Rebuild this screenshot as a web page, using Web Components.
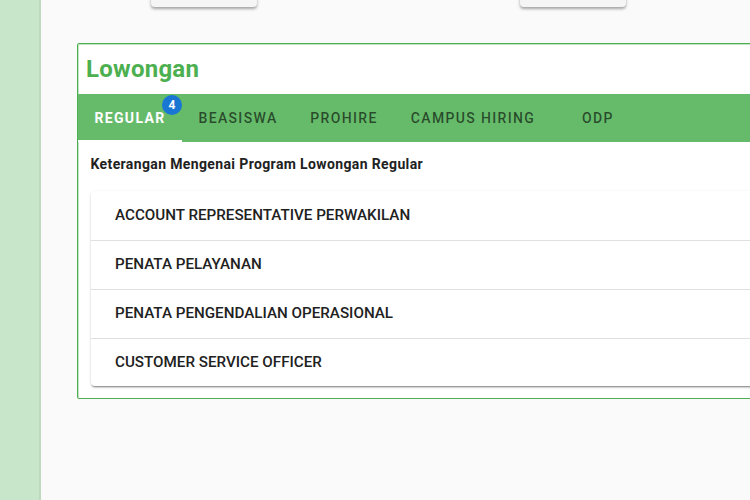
<!DOCTYPE html>
<html><head><meta charset="utf-8"><title>Lowongan</title>
<style>
html,body{margin:0;padding:0;width:750px;height:500px;overflow:hidden;background:#fafafa;font-family:Roboto,"Liberation Sans",sans-serif}
</style></head><body>
<app-shell>
  <stub-row></stub-row>
  <job-panel title-text="Lowongan">
    <job-tabs></job-tabs>
    <p-note>Keterangan Mengenai Program Lowongan Regular</p-note>
    <job-list>
      <job-item>ACCOUNT REPRESENTATIVE PERWAKILAN</job-item>
      <job-item>PENATA PELAYANAN</job-item>
      <job-item>PENATA PENGENDALIAN OPERASIONAL</job-item>
      <job-item>CUSTOMER SERVICE OFFICER</job-item>
    </job-list>
  </job-panel>
</app-shell>
<script>
function def(name,html,init){
  customElements.define(name,class extends HTMLElement{
    constructor(){super();this.attachShadow({mode:'open'}).innerHTML=html;}
    connectedCallback(){if(init)init(this);}
  });
}
def('app-shell',`<style>
:host{display:flex;width:750px;height:500px;overflow:hidden;background:#fafafa}
.side{flex:none;height:100%;background:#c8e6c9;border-right:2px solid #bfd9c0;width:39px}
.main{flex:none;width:900px;padding-left:36px;box-sizing:border-box}
</style><div class="side"></div><div class="main"><slot></slot></div>`);
def('stub-row',`<style>
:host{display:flex;height:7px;margin-left:74px;gap:263px;margin-bottom:36px;align-items:flex-end}
.b{width:106px;height:20px;background:#f5f5f5;border-radius:0 0 4px 4px;box-shadow:0 2px 3px rgba(0,0,0,.35)}
</style><div class="b"></div><div class="b"></div>`);
def('job-panel',`<style>
:host{display:block;width:860px;box-sizing:border-box;border:1px solid #4caf50;background:#fff;border-radius:2px;padding-bottom:12px;box-shadow:inset 1px 1px 0 rgba(76,175,80,.35)}
h2{margin:0;height:50px;padding-left:8px;font:700 24px/51px Roboto,sans-serif;letter-spacing:.25px;color:#4caf50}
</style><h2></h2><slot></slot>`,el=>{el.shadowRoot.querySelector('h2').textContent=el.getAttribute('title-text');});
def('job-tabs',`<style>
:host{display:flex;height:48px;background:#66bb6a;font:500 14px/48px Roboto,sans-serif;letter-spacing:1.35px;color:rgba(0,0,0,.6)}
.t{position:relative;text-align:center;box-sizing:border-box;flex:none;height:48px}
.a{color:#fff;border-bottom:2px solid #fff;width:104px;font-weight:700}
.badge{position:absolute;left:84px;top:1px;width:20px;height:20px;border-radius:50%;background:#1976d2;color:#fff;font:700 12px/20px Roboto,sans-serif;letter-spacing:0;text-align:center}
</style>
<div class="t a">REGULAR<span class="badge">4</span></div>
<div class="t" style="width:112px">BEASISWA</div>
<div class="t" style="width:100px">PROHIRE</div>
<div class="t" style="width:158px">CAMPUS HIRING</div>
<div class="t" style="width:92px">ODP</div>`);
def('p-note',`<style>
:host{display:block;padding:12px 12.5px 17px;font:700 14px/20px Roboto,sans-serif;letter-spacing:.37px;color:#212121}
</style><slot></slot>`);
def('job-list',`<style>
:host{display:block;margin-left:13px;padding-top:1px;background:#fff;border-radius:4px;box-shadow:0 2px 2px -1px rgba(0,0,0,.45),0 1px 3px 0 rgba(0,0,0,.14)}
</style><slot></slot>`);
def('job-item',`<style>
:host{display:block;height:48px;padding-left:24px;font:500 15.2px/46px Roboto,sans-serif;color:#212121;border-bottom:1px solid #e0e0e0}
:host(:last-child){border-bottom:0;height:47px}
</style><slot></slot>`);
</script>
</body></html>
